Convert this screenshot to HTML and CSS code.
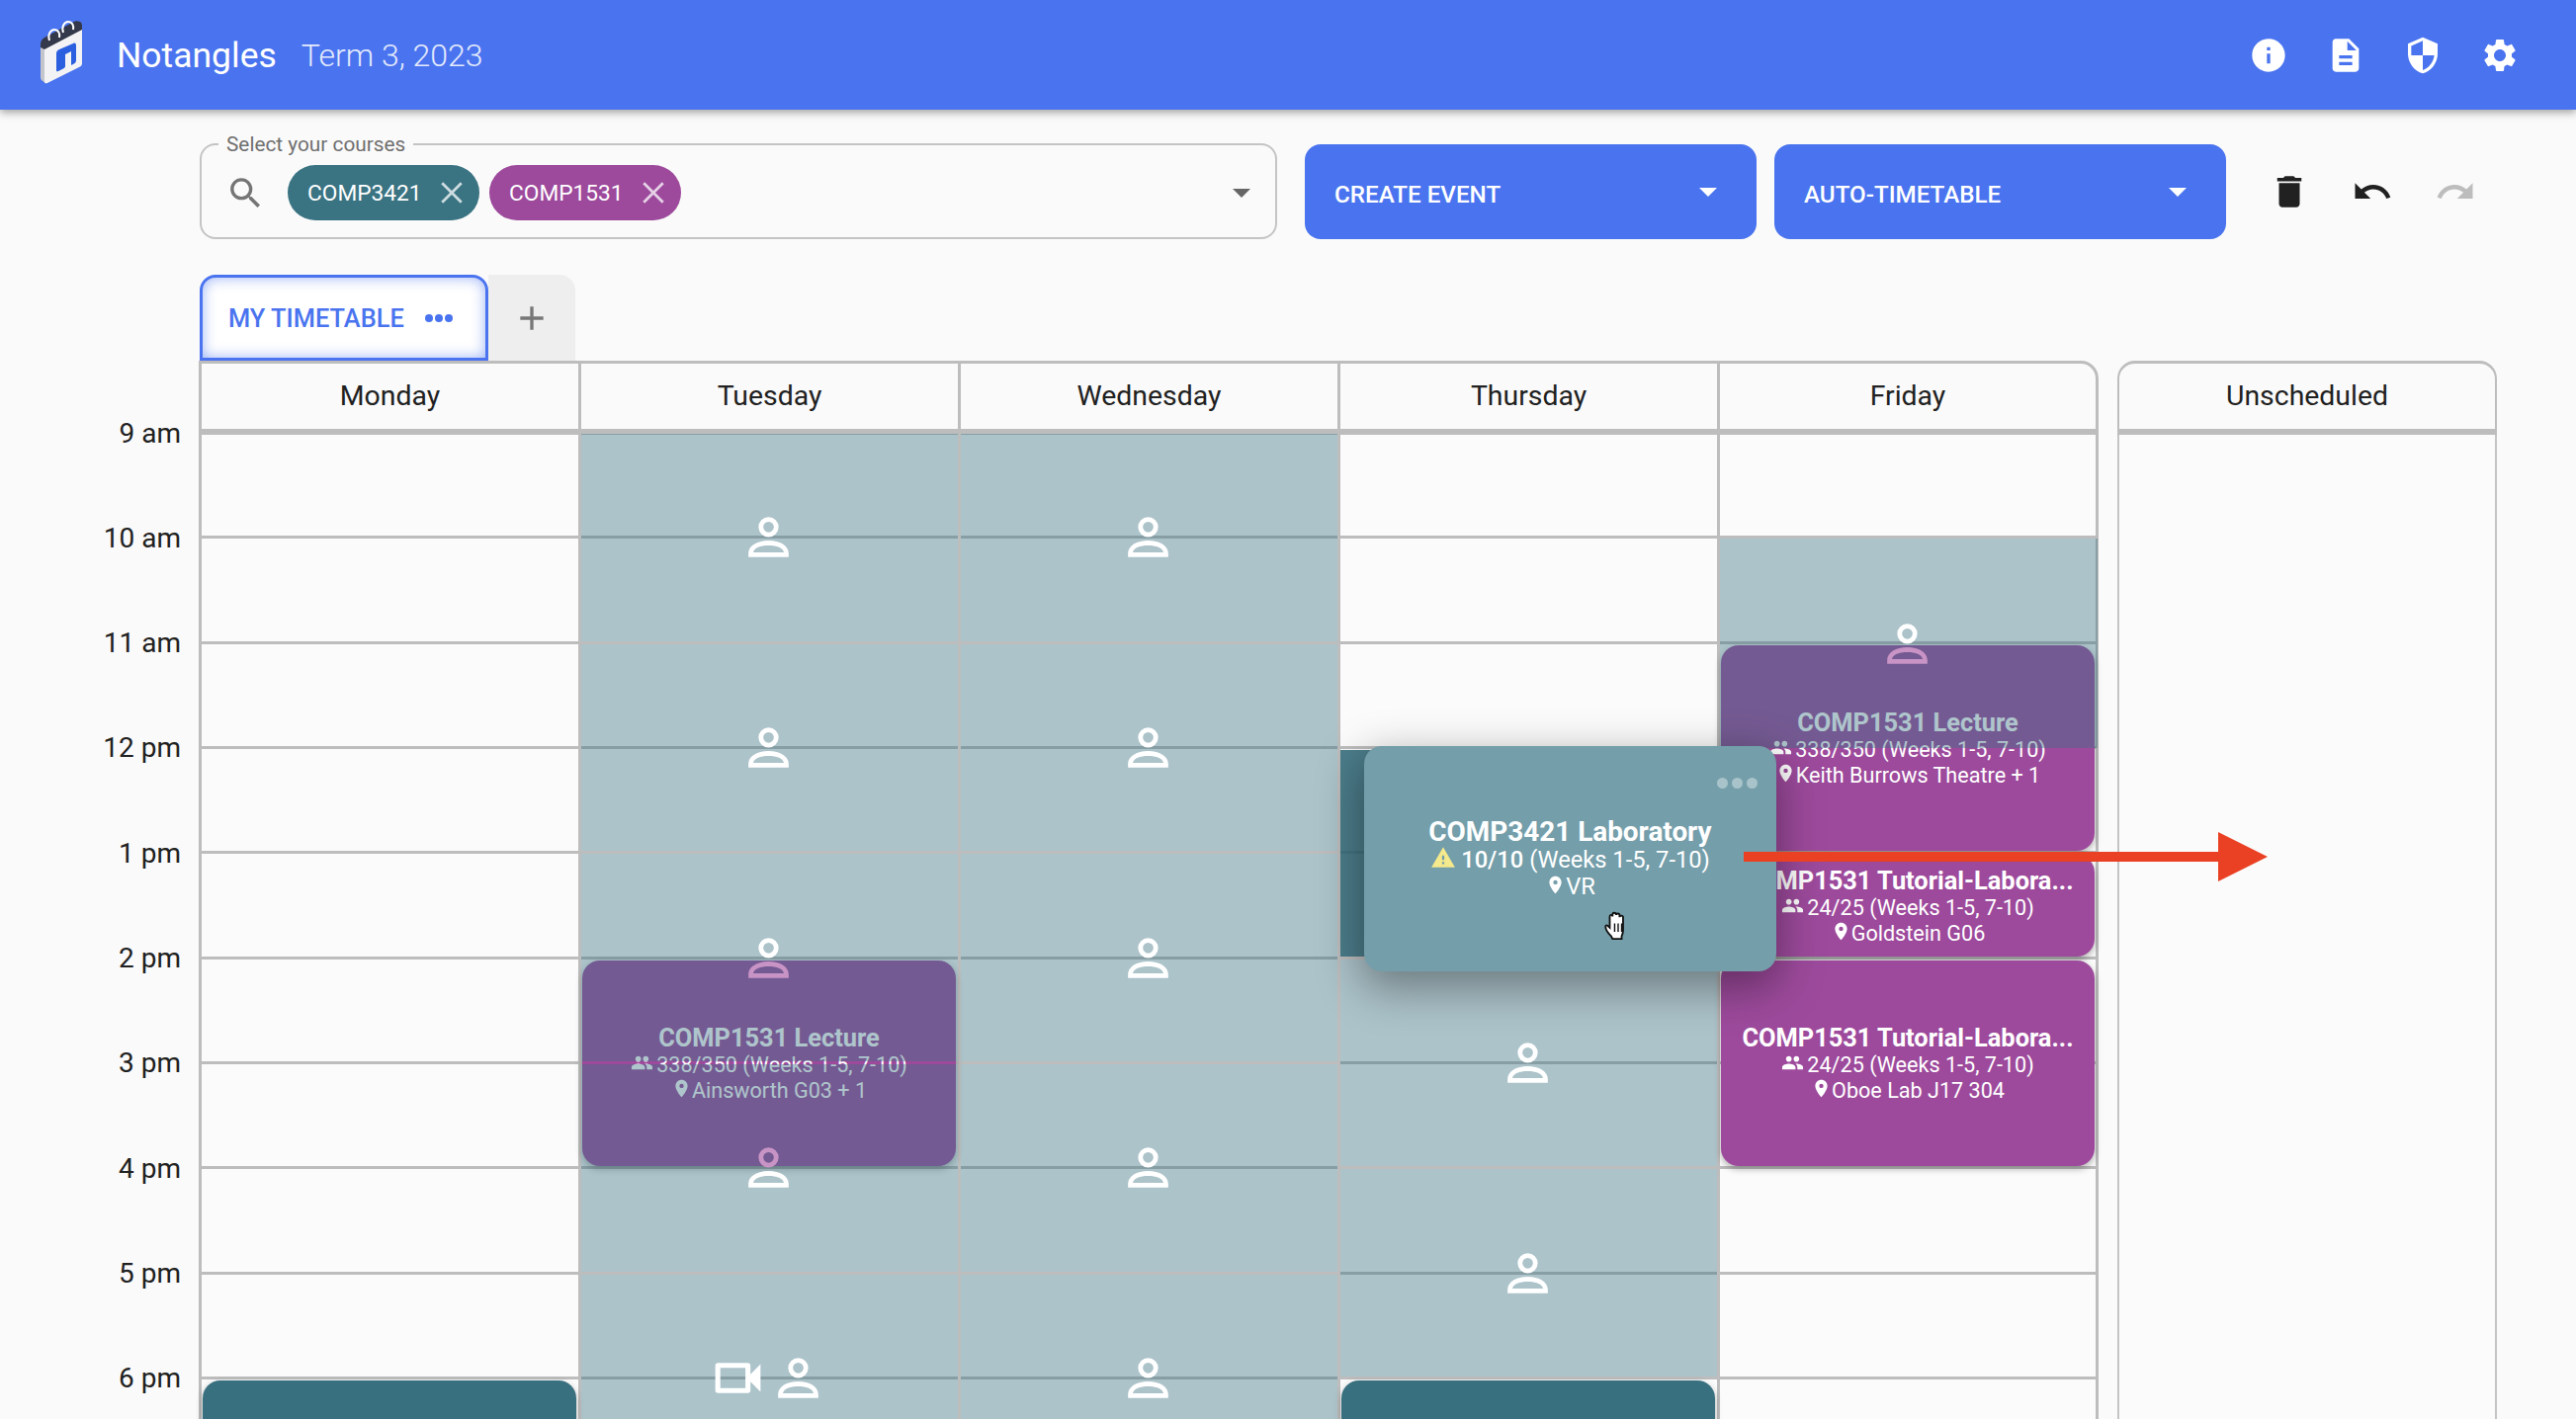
FILE: index.html
```html
<!DOCTYPE html>
<html lang="en">
<head>
    <meta charset="UTF-8">
    <title>Notangles</title>
    <link rel="stylesheet" href="styles.css">
</head>
<body>
    <svg class="defs" width="0" height="0">
        <symbol id="i-people" viewBox="0 0 24 24"><path d="M16 11c1.66 0 2.99-1.34 2.99-3S17.66 5 16 5c-1.66 0-3 1.34-3 3s1.34 3 3 3zm-8 0c1.66 0 2.99-1.34 2.99-3S9.66 5 8 5C6.34 5 5 6.34 5 8s1.34 3 3 3zm0 2c-2.33 0-7 1.17-7 3.5V19h14v-2.5c0-2.33-4.67-3.5-7-3.5zm8 0c-.29 0-.62.02-.97.05 1.16.84 1.97 1.97 1.97 3.45V19h6v-2.5c0-2.33-4.67-3.5-7-3.5z"/></symbol>
        <symbol id="i-pin" viewBox="0 0 24 24"><path d="M12 2C8.13 2 5 5.13 5 9c0 5.25 7 13 7 13s7-7.75 7-13c0-3.87-3.13-7-7-7zm0 9.5a2.5 2.5 0 010-5 2.5 2.5 0 010 5z"/></symbol>
        <symbol id="i-video" viewBox="0 0 24 24"><path d="M15 8v8H5V8h10m1-2H4c-.55 0-1 .45-1 1v10c0 .55.45 1 1 1h12c.55 0 1-.45 1-1v-3.5l4 4v-11l-4 4V7c0-.55-.45-1-1-1z"/></symbol>
        <symbol id="i-person" viewBox="0 0 24 24"><circle class="head" cx="12" cy="8" r="3.05"/><path class="body" fill-rule="evenodd" d="M4 20v-1.500C4 15.500 7.500 13.400 12 13.400s8 2.100 8 5.100V20zM5.900 18.100h12.200C17.800 16.300 15.200 15.300 12 15.300s-5.800 1-6.100 2.800z"/></symbol>
    </svg>

    <header class="navbar">
        <svg class="logo" viewBox="0 0 54 74">
            <path d="M5 28v34c0 2 1 3 2 4l3 2 37-20V12z" fill="#c3c5cc"/>
            <path d="M9 32 47 12v36c0 2-1 3-3 4L12 68c-2 1-3 0-3-2z" fill="#f3f3f5"/>
            <path d="M5 29c0-3 1-5 4-7L37 7c3-2 5-2 8-1 2 1 2 3 2 5v3L9 34l-4-2z" fill="#33384a"/>
            <path d="M14 25c-2-6 1-11 5-11s6 4 5 8M28 17c-2-6 1-11 5-11s6 4 5 8" fill="none" stroke="#fff" stroke-width="2"/>
            <path d="M21 38c0-2 1-3 3-4l14-6c2-1 3 0 3 2v15c0 2-1 3-3 4l-2 1V36l-6 3v12c0 1-1 2-2 2.500l-5 2.500c-1.500.7-2 0-2-1z" fill="#2b5fe0"/>
        </svg>
        <span class="brand">Notangles</span>
        <span class="term">Term 3, 2023</span>
        <nav class="nav-icons">
            <svg viewBox="0 0 24 24"><path d="M12 2C6.48 2 2 6.48 2 12s4.48 10 10 10 10-4.48 10-10S17.52 2 12 2zm1 15h-2v-6h2v6zm0-8h-2V7h2v2z"/></svg>
            <svg viewBox="0 0 24 24"><path d="M14 2H6c-1.1 0-1.99.9-1.99 2L4 20c0 1.1.89 2 1.99 2H18c1.1 0 2-.9 2-2V8l-6-6zm2 16H8v-2h8v2zm0-4H8v-2h8v2zm-3-5V3.5L18.5 9H13z"/></svg>
            <svg viewBox="0 0 24 24"><path d="M12 1L3 5v6c0 5.55 3.84 10.74 9 12 5.16-1.26 9-6.45 9-12V5l-9-4zm0 10.99h7c-.53 4.12-3.28 7.79-7 8.94V12H5V6.3l7-3.11v8.8z"/></svg>
            <svg viewBox="0 0 24 24"><path d="M19.14 12.94c.04-.3.06-.61.06-.94 0-.32-.02-.64-.07-.94l2.03-1.58c.18-.14.23-.41.12-.61l-1.92-3.32c-.12-.22-.37-.29-.59-.22l-2.39.96c-.5-.38-1.03-.7-1.62-.94l-.36-2.54c-.04-.24-.24-.41-.48-.41h-3.84c-.24 0-.43.17-.47.41l-.36 2.54c-.59.24-1.13.57-1.62.94l-2.39-.96c-.22-.08-.47 0-.59.22L2.74 8.87c-.12.21-.08.47.12.61l2.03 1.58c-.05.3-.09.63-.09.94s.02.64.07.94l-2.03 1.58c-.18.14-.23.41-.12.61l1.92 3.32c.12.22.37.29.59.22l2.39-.96c.5.38 1.03.7 1.62.94l.36 2.54c.05.24.24.41.48.41h3.84c.24 0 .44-.17.47-.41l.36-2.54c.59-.24 1.13-.56 1.62-.94l2.39.96c.22.08.47 0 .59-.22l1.92-3.32c.12-.22.07-.47-.12-.61l-2.01-1.58zM12 15.6c-1.98 0-3.6-1.62-3.6-3.6s1.62-3.6 3.6-3.6 3.6 1.62 3.6 3.6-1.62 3.6-3.6 3.6z"/></svg>
        </nav>
    </header>

    <section class="controls">
        <fieldset class="course-select">
            <legend>Select your courses</legend>
            <svg class="search-icon" viewBox="0 0 24 24"><path d="M15.5 14h-.79l-.28-.27C15.41 12.59 16 11.11 16 9.5 16 5.91 13.09 3 9.5 3S3 5.91 3 9.5 5.91 16 9.5 16c1.61 0 3.09-.59 4.23-1.57l.27.28v.79l5 4.99L20.49 19l-4.99-5zm-6 0C7.01 14 5 11.99 5 9.5S7.01 5 9.5 5 14 7.01 14 9.5 11.99 14 9.5 14z"/></svg>
            <div class="chip chip-teal">COMP3421
                <svg viewBox="0 0 24 24"><path d="M3 3l18 18M21 3L3 21"/></svg>
            </div>
            <div class="chip chip-purple">COMP1531
                <svg viewBox="0 0 24 24"><path d="M3 3l18 18M21 3L3 21"/></svg>
            </div>
            <span class="caret caret-grey"></span>
        </fieldset>
        <button class="action-btn"><span>CREATE EVENT</span><span class="caret"></span></button>
        <button class="action-btn"><span>AUTO-TIMETABLE</span><span class="caret"></span></button>
        <div class="history">
            <svg viewBox="0 0 24 24"><path d="M6 19c0 1.1.9 2 2 2h8c1.1 0 2-.9 2-2V7H6v12zM19 4h-3.5l-1-1h-5l-1 1H5v2h14V4z"/></svg>
            <svg viewBox="0 0 24 24"><path d="M12.5 8c-2.65 0-5.05.99-6.9 2.6L2 7v9h9l-3.62-3.62c1.39-1.16 3.16-1.88 5.12-1.88 3.54 0 6.55 2.31 7.6 5.5l2.37-.78C21.08 11.03 17.15 8 12.5 8z"/></svg>
            <svg class="disabled" viewBox="0 0 24 24"><path d="M18.4 10.6C16.55 8.99 14.15 8 11.5 8c-4.65 0-8.58 3.03-9.96 7.22L3.9 16c1.05-3.19 4.05-5.5 7.6-5.5 1.95 0 3.73.72 5.12 1.88L13 16h9V7l-3.6 3.6z"/></svg>
        </div>
    </section>

    <div class="tabs">
        <div class="tab-active">MY TIMETABLE
            <span class="tab-dots"><i></i><i></i><i></i></span>
        </div>
        <div class="tab-add"><svg viewBox="0 0 24 24"><path d="M19 13h-6v6h-2v-6H5v-2h6V5h2v6h6v2z"/></svg></div>
    </div>

    <main class="timetable">
        <div class="day-head col-mon">Monday</div>
        <div class="day-head col-tue">Tuesday</div>
        <div class="day-head col-wed">Wednesday</div>
        <div class="day-head col-thu">Thursday</div>
        <div class="day-head col-fri last-day">Friday</div>
        <div class="day-head col-uns unscheduled-head">Unscheduled</div>

        <div class="day-col col-mon"></div>
        <div class="day-col col-tue"></div>
        <div class="day-col col-wed"></div>
        <div class="day-col col-thu"></div>
        <div class="day-col col-fri last-day"></div>
        <div class="unscheduled-col col-uns"></div>

        <div class="time" style="grid-row: 2">9 am</div>
        <div class="time" style="grid-row: 3">10 am</div>
        <div class="time" style="grid-row: 4">11 am</div>
        <div class="time" style="grid-row: 5">12 pm</div>
        <div class="time" style="grid-row: 6">1 pm</div>
        <div class="time" style="grid-row: 7">2 pm</div>
        <div class="time" style="grid-row: 8">3 pm</div>
        <div class="time" style="grid-row: 9">4 pm</div>
        <div class="time" style="grid-row: 10">5 pm</div>
        <div class="time" style="grid-row: 11">6 pm</div>

        <!-- cards -->
        <div class="card card-purple col-tue" style="grid-row: 7 / span 2">
            <div class="card-title">COMP1531 Lecture</div>
            <div class="card-line"><svg><use href="#i-people"/></svg>338/350 (Weeks 1-5, 7-10)</div>
            <div class="card-line"><svg class="pin"><use href="#i-pin"/></svg>Ainsworth G03 + 1</div>
        </div>
        <div class="card card-purple col-fri" style="grid-row: 4 / span 2">
            <div class="card-title">COMP1531 Lecture</div>
            <div class="card-line"><svg><use href="#i-people"/></svg>338/350 (Weeks 1-5, 7-10)</div>
            <div class="card-line"><svg class="pin"><use href="#i-pin"/></svg>Keith Burrows Theatre + 1</div>
        </div>
        <div class="card card-purple col-fri" style="grid-row: 6">
            <div class="card-title">COMP1531 Tutorial-Labora...</div>
            <div class="card-line"><svg><use href="#i-people"/></svg>24/25 (Weeks 1-5, 7-10)</div>
            <div class="card-line"><svg class="pin"><use href="#i-pin"/></svg>Goldstein G06</div>
        </div>
        <div class="card card-purple col-fri" style="grid-row: 7 / span 2">
            <div class="card-title">COMP1531 Tutorial-Labora...</div>
            <div class="card-line"><svg><use href="#i-people"/></svg>24/25 (Weeks 1-5, 7-10)</div>
            <div class="card-line"><svg class="pin"><use href="#i-pin"/></svg>Oboe Lab J17 304</div>
        </div>
        <div class="card card-teal col-mon" style="grid-row: 11 / span 2"></div>
        <div class="card card-teal col-thu" style="grid-row: 11 / span 2"></div>
        <div class="card card-origin col-thu" style="grid-row: 5 / span 2"></div>

        <!-- drop zones, each two hours, drawn over the cards -->
        <div class="zone col-tue" style="grid-row: 2 / span 2"><svg class="person"><use href="#i-person"/></svg></div>
        <div class="zone col-tue" style="grid-row: 4 / span 2"><svg class="person"><use href="#i-person"/></svg></div>
        <div class="zone col-tue" style="grid-row: 6 / span 2"><svg class="person" viewBox="0 0 24 24"><circle class="head" cx="12" cy="8" r="3.05"/><path class="body tint" fill-rule="evenodd" d="M4 20v-1.500C4 15.500 7.500 13.400 12 13.400s8 2.100 8 5.100V20zM5.900 18.100h12.200C17.800 16.300 15.200 15.300 12 15.300s-5.800 1-6.100 2.800z"/></svg></div>
        <div class="zone col-tue" style="grid-row: 8 / span 2"><svg class="person" viewBox="0 0 24 24"><circle class="head tint" cx="12" cy="8" r="3.05"/><path class="body" fill-rule="evenodd" d="M4 20v-1.500C4 15.500 7.500 13.400 12 13.400s8 2.100 8 5.100V20zM5.900 18.100h12.200C17.800 16.300 15.200 15.300 12 15.300s-5.800 1-6.100 2.800z"/></svg></div>
        <div class="zone col-tue" style="grid-row: 10 / span 2"><svg class="video"><use href="#i-video"/></svg><svg class="person"><use href="#i-person"/></svg></div>
        <div class="zone col-tue" style="grid-row: 12"></div>

        <div class="zone col-wed" style="grid-row: 2 / span 2"><svg class="person"><use href="#i-person"/></svg></div>
        <div class="zone col-wed" style="grid-row: 4 / span 2"><svg class="person"><use href="#i-person"/></svg></div>
        <div class="zone col-wed" style="grid-row: 6 / span 2"><svg class="person"><use href="#i-person"/></svg></div>
        <div class="zone col-wed" style="grid-row: 8 / span 2"><svg class="person"><use href="#i-person"/></svg></div>
        <div class="zone col-wed" style="grid-row: 10 / span 2"><svg class="person"><use href="#i-person"/></svg></div>
        <div class="zone col-wed" style="grid-row: 12"></div>

        <div class="zone col-thu" style="grid-row: 7 / span 2"><svg class="person"><use href="#i-person"/></svg></div>
        <div class="zone col-thu" style="grid-row: 9 / span 2"><svg class="person"><use href="#i-person"/></svg></div>

        <div class="zone zone-fri col-fri" style="grid-row: 3 / span 2"><svg class="person" viewBox="0 0 24 24"><circle class="head" cx="12" cy="8" r="3.05"/><path class="body tint" fill-rule="evenodd" d="M4 20v-1.500C4 15.500 7.500 13.400 12 13.400s8 2.100 8 5.100V20zM5.900 18.100h12.200C17.800 16.300 15.200 15.300 12 15.300s-5.800 1-6.100 2.800z"/></svg></div>

        <!-- the card being dragged -->
        <div class="card card-drag">
            <span class="drag-dots"><i></i><i></i><i></i></span>
            <div class="card-title">COMP3421 Laboratory</div>
            <div class="card-line"><svg class="warn" viewBox="0 0 24 24"><path d="M1 21h22L12 2 1 21z" fill="#f4e98c"/><path d="M13 18h-2v-2h2v2zm0-4h-2v-4h2v4z" fill="#749eaa"/></svg><b>10/10</b>&nbsp;(Weeks 1-5, 7-10)</div>
            <div class="card-line"><svg class="pin"><use href="#i-pin"/></svg>VR</div>
            <svg class="hand" viewBox="0 0 24 24">
                <path d="M7 20c-2-2-4-5-4-7 0-1 1.500-1 2 0l1 1V6c0-1.500 2-1.500 2 0V4.500c0-1.500 2.500-1.500 2.500 0V5c0-1.500 2.500-1.500 2.500 0v1.500c0-1.500 2.500-1.500 2.500 0V16c0 2-.5 3-1 4v2H8z" fill="#fff" stroke="#111" stroke-width="1.300"/>
                <path d="M9.500 11v6M12 11v6M14.500 11v6" stroke="#111" stroke-width="1"/>
            </svg>
        </div>

        <!-- annotation arrow -->
        <svg class="arrow" viewBox="0 0 530 50"><path d="M0 20h480V0l50 25-50 25V30H0z"/></svg>
    </main>
</body>
</html>
```

FILE: styles.css
```css
* {
    box-sizing: border-box;
}

body {
    margin: 0;
    height: 100vh;
    overflow: hidden;
    background: #fafafa;
    color: #212121;
    font-family: Roboto, sans-serif;
}

.defs {
    position: absolute;
}

/* top bar */
.navbar {
    height: 111px;
    background: #4a74ef;
    color: white;
    display: flex;
    align-items: center;
    padding-left: 36px;
    box-shadow: 0 3px 8px rgba(0, 0, 0, 0.35);
    position: relative;
    z-index: 5;
}

.logo {
    width: 54px;
    height: 74px;
    margin-top: -6px;
}

.brand {
    font-size: 35.5px;
    margin-left: 28px;
}

.term {
    font-size: 32px;
    font-weight: 300;
    margin-left: 25px;
    opacity: 0.85;
}

.nav-icons {
    margin-left: auto;
    margin-right: 57px;
    display: flex;
    gap: 38px;
}

.nav-icons svg {
    width: 40px;
    height: 40px;
    fill: white;
}

/* controls row */
.controls {
    display: flex;
    align-items: flex-end;
    margin-top: 25px;
    padding-left: 202px;
}

.course-select {
    width: 1090px;
    height: 106px;
    margin: 0 28px 0 0;
    padding: 0 25px 6px 24px;
    border: 2px solid #c4c4c4;
    border-radius: 16px;
    display: flex;
    align-items: center;
}

.course-select legend {
    margin-left: -7px;
    padding: 0 8px;
    font-size: 20.8px;
    line-height: 20px;
    color: #707070;
}

.search-icon {
    width: 41px;
    height: 41px;
    fill: #757575;
    margin-right: 22px;
}

.chip {
    height: 56px;
    width: 194px;
    margin-right: 10px;
    padding: 0 15px 0 20px;
    border-radius: 28px;
    color: white;
    font-size: 22.7px;
    display: flex;
    align-items: center;
    justify-content: space-between;
}

.chip svg {
    width: 26px;
    height: 26px;
    fill: none;
    stroke: rgba(255, 255, 255, 0.75);
    stroke-width: 2.6;
}

.chip-teal {
    background: #3a7382;
}

.chip-purple {
    background: #9d4a9c;
}

.caret {
    width: 0;
    height: 0;
    border-left: 9px solid transparent;
    border-right: 9px solid transparent;
    border-top: 9px solid white;
}

.caret-grey {
    border-top-color: #666;
    margin-left: auto;
}

.action-btn {
    width: 457px;
    height: 96px;
    margin-right: 18px;
    padding: 6px 40px 0 30px;
    border: none;
    border-radius: 16px;
    background: #4a74ef;
    color: white;
    font-family: Roboto, sans-serif;
    font-size: 24.2px;
    font-weight: 500;
    display: flex;
    align-items: center;
    justify-content: space-between;
}

.action-btn .caret {
    margin-top: -6px;
}

.history {
    height: 96px;
    margin-left: 25px;
    display: flex;
    align-items: center;
    gap: 42px;
}

.history svg {
    width: 42px;
    height: 42px;
    fill: #212121;
}

.history .disabled {
    fill: #bdbdbd;
}

/* tabs */
.tabs {
    display: flex;
    height: 87px;
    margin-top: 36px;
    padding-left: 202px;
}

.tab-active {
    width: 292px;
    padding-left: 26px;
    border: 3px solid #4a74ef;
    border-radius: 16px 16px 0 0;
    background: white;
    box-shadow: inset 0 0 14px rgba(74, 116, 239, 0.55);
    color: #4a74ef;
    font-size: 25.4px;
    font-weight: 500;
    display: flex;
    align-items: center;
    position: relative;
    z-index: 2;
}

.tab-dots {
    margin-left: 21px;
    display: flex;
    gap: 2px;
}

.tab-dots i {
    width: 8px;
    height: 8px;
    border-radius: 50%;
    background: #4a74ef;
}

.tab-add {
    width: 88px;
    background: #eeeeee;
    border-radius: 0 16px 0 0;
    display: flex;
    align-items: center;
    justify-content: center;
}

.tab-add svg {
    width: 40px;
    height: 40px;
    fill: #777;
}

/* calendar */
.timetable {
    position: relative;
    display: grid;
    grid-template-columns: 201px repeat(5, 384px) 21px 384px;
    grid-template-rows: 71px repeat(11, 106.33px);
}

.col-mon { grid-column: 2; }
.col-tue { grid-column: 3; }
.col-wed { grid-column: 4; }
.col-thu { grid-column: 5; }
.col-fri { grid-column: 6; }
.col-uns { grid-column: 8; }

.day-head {
    grid-row: 1;
    height: 75px;
    padding-bottom: 2px;
    border-top: 3px solid #bdbdbd;
    border-left: 3px solid #bdbdbd;
    border-bottom: 6px solid #bdbdbd;
    font-size: 28.4px;
    display: flex;
    align-items: center;
    justify-content: center;
    position: relative;
    z-index: 1;
}

.day-head.last-day {
    margin-right: -2px;
    border-right: 3px solid #bdbdbd;
    border-top-right-radius: 18px;
}

.unscheduled-head {
    border-left-width: 2px;
    border-right: 2px solid #bdbdbd;
    border-radius: 18px 18px 0 0;
}

.day-col {
    grid-row: 2 / -1;
    border-left: 3px solid #bdbdbd;
    background: repeating-linear-gradient(#bdbdbd 0, #bdbdbd 3px, #fbfbfb 3px, #fbfbfb 106.33px);
}

.day-col.last-day {
    margin-right: -2px;
    border-right: 3px solid #bdbdbd;
}

.unscheduled-col {
    grid-row: 2 / -1;
    border-left: 2px solid #c4c4c4;
    border-right: 2px solid #c4c4c4;
    background: #fbfbfb;
}

.time {
    grid-column: 1;
    height: 0;
    padding-right: 18px;
    font-size: 28px;
    display: flex;
    align-items: center;
    justify-content: flex-end;
    margin-top: 2px;
}

.card {
    margin: 4px 2px 0 4px;
    padding-top: 2px;
    border-radius: 18px;
    box-shadow: 0 3px 7px rgba(0, 0, 0, 0.3);
    color: white;
    display: flex;
    flex-direction: column;
    align-items: center;
    justify-content: center;
    overflow: hidden;
    position: relative;
    z-index: 1;
}

.card-purple {
    background: #9d4a9c;
}

.card-teal {
    background: #38707f;
}

.card-origin {
    margin-left: 3px;
    border-radius: 0;
    background: rgba(46, 104, 120, 0.86);
    box-shadow: none;
}

.card-title {
    font-size: 25.4px;
    font-weight: 700;
    line-height: 29px;
    white-space: nowrap;
}

.card-line {
    font-size: 21.6px;
    line-height: 26px;
    display: flex;
    align-items: center;
    white-space: nowrap;
}

.card-line svg {
    width: 23px;
    height: 23px;
    margin: -5px 3px 0 0;
    fill: white;
    flex: none;
}

.card-line .pin {
    width: 21px;
    height: 21px;
    margin-right: 0;
}

.card-line b {
    font-weight: 500;
}

/* dragged card floats over both columns */
.card-drag {
    position: absolute;
    left: 1380px;
    top: 390px;
    width: 417px;
    height: 228px;
    margin: 0;
    padding: 0;
    background: #749eaa;
    box-shadow: 0 14px 44px 4px rgba(0, 0, 0, 0.36);
    overflow: visible;
    z-index: 3;
}

.card-drag .card-title {
    font-size: 27.9px;
    line-height: 30px;
}

.card-drag .card-line {
    font-size: 23.7px;
    line-height: 27px;
}

.card-drag .warn {
    width: 26px;
    height: 26px;
    margin-right: 5px;
}

.drag-dots {
    position: absolute;
    top: 32px;
    right: 19px;
    display: flex;
    gap: 4px;
}

.drag-dots i {
    width: 11px;
    height: 11px;
    border-radius: 50%;
    background: #a9c3ca;
}

.hand {
    position: absolute;
    left: 240px;
    top: 164px;
    width: 34px;
    height: 34px;
}

.arrow {
    position: absolute;
    left: 1764px;
    top: 477px;
    width: 530px;
    height: 50px;
    fill: #ea4023;
    z-index: 4;
}

.zone {
    margin: 3px 0 0 3px;
    padding-right: 3px;
    background: rgba(58, 115, 130, 0.41);
    display: flex;
    align-items: center;
    justify-content: center;
    position: relative;
    z-index: 2;
}

.zone-fri {
    margin-right: -1px;
    margin-bottom: -2px;
}

.person,
.video {
    width: 61px;
    height: 61px;
    flex: none;
    fill: white;
}

.person .tint {
    fill: #c893c5;
}

.person .head,
#i-person .head {
    fill: none;
    stroke: white;
    stroke-width: 1.9;
}

.person .head.tint {
    fill: none;
    stroke: #c893c5;
}
```
